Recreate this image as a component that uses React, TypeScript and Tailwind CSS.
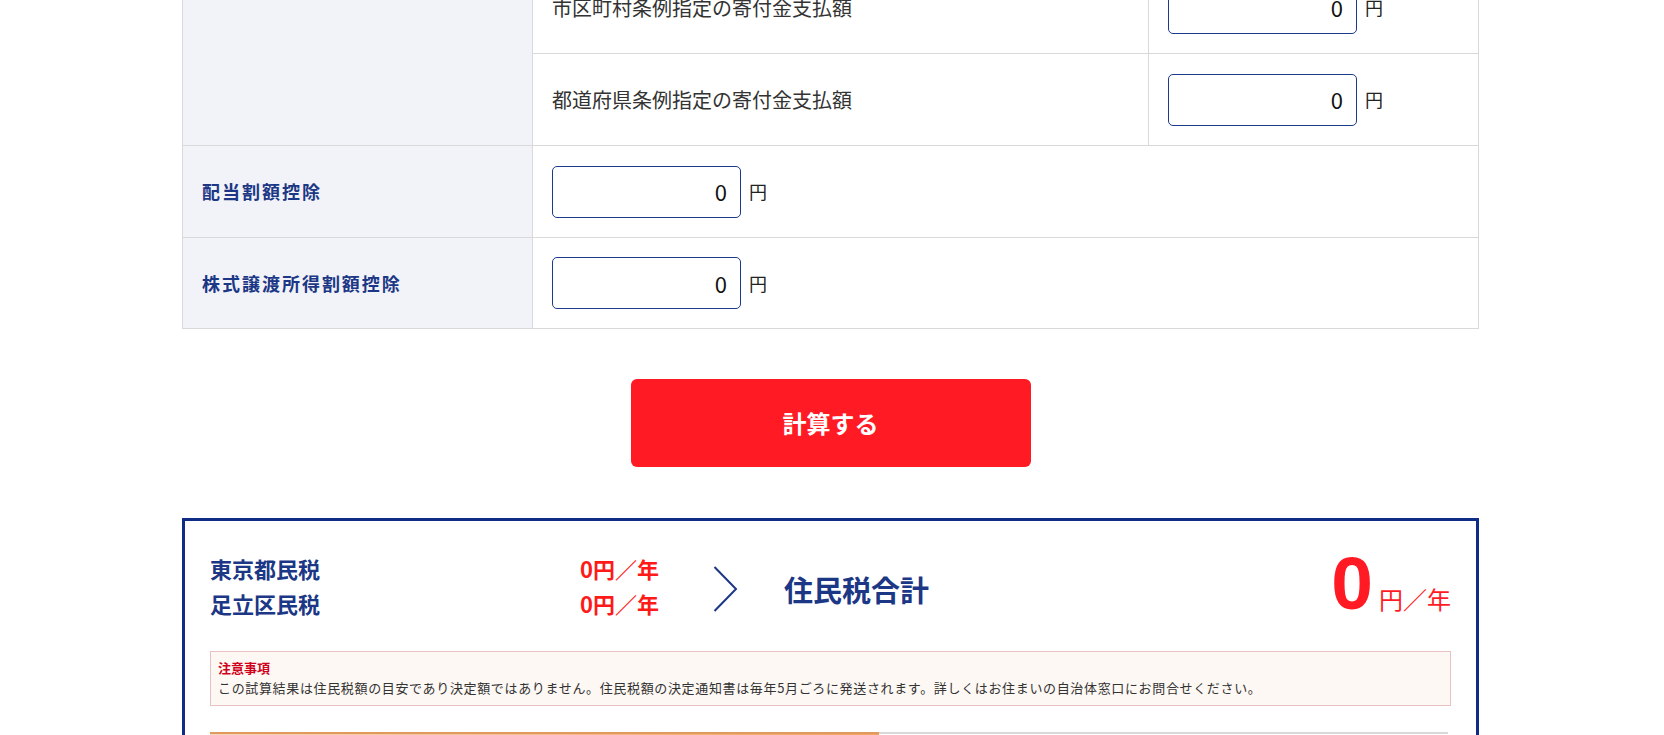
import React from "react";

const font = { fontFamily: '"Noto Sans CJK JP", "Noto Sans", sans-serif' };

function Yen({ value = "0" }: { value?: string }) {
  return (
    <div className="flex items-center">
      <div className="w-[189px] h-[52px] rounded-[5px] border border-[#1c3a8c] bg-white flex items-center justify-end pr-[13px] text-[22px] text-[#111]">
        {value}
      </div>
      <span className="ml-[8px] text-[18px] text-[#222]">円</span>
    </div>
  );
}

export default function App() {
  return (
    <div className="bg-white w-[1664px] h-[735px] overflow-hidden text-[#222]" style={font}>
      <div className="w-[1297px] ml-[182px] -mt-[39px]">
        {/* table */}
        <div className="border border-[#d9d9d9]">
          {/* grouped rows */}
          <div className="flex">
            <div className="w-[350px] bg-[#f2f3f8] border-r border-[#d9d9d9]" />
            <div className="flex-1 flex flex-col">
              <div className="flex h-[92px] border-b border-[#d9d9d9]">
                <div className="w-[616px] pl-[19px] flex items-center text-[20px] text-[#333] border-r border-[#d9d9d9]">
                  市区町村条例指定の寄付金支払額
                </div>
                <div className="flex-1 pl-[19px] flex items-center">
                  <Yen />
                </div>
              </div>
              <div className="flex h-[91px]">
                <div className="w-[616px] pl-[19px] flex items-center text-[20px] text-[#333] border-r border-[#d9d9d9]">
                  都道府県条例指定の寄付金支払額
                </div>
                <div className="flex-1 pl-[19px] flex items-center">
                  <Yen />
                </div>
              </div>
            </div>
          </div>
          <div className="flex h-[92px] border-t border-[#d9d9d9]">
            <div className="w-[350px] bg-[#f2f3f8] border-r border-[#d9d9d9] pl-[19px] flex items-center text-[18px] font-bold text-[#1b3785] tracking-[0.11em]">
              配当割額控除
            </div>
            <div className="flex-1 pl-[19px] flex items-center">
              <Yen />
            </div>
          </div>
          <div className="flex h-[91px] border-t border-[#d9d9d9]">
            <div className="w-[350px] bg-[#f2f3f8] border-r border-[#d9d9d9] pl-[19px] flex items-center text-[18px] font-bold text-[#1b3785] tracking-[0.11em]">
              株式譲渡所得割額控除
            </div>
            <div className="flex-1 pl-[19px] flex items-center">
              <Yen />
            </div>
          </div>
        </div>

        {/* button */}
        <div className="flex justify-center mt-[50px]">
          <button className="w-[400px] h-[88px] rounded-[6px] bg-[#ff1a24] text-white text-[24px] font-bold">
            計算する
          </button>
        </div>

        {/* result */}
        <div className="mt-[51px] border-[3px] border-[#0f2d84] px-[25px] pt-[32px] h-[300px]">
          <div className="flex items-center h-[70px]">
            <div className="w-[449px] flex flex-col text-[22px] font-bold leading-[35px] -mt-[4px]">
              <div className="flex justify-between">
                <span className="text-[#1b3785]">東京都民税</span>
                <span className="text-[#ff1a1a]">0円／年</span>
              </div>
              <div className="flex justify-between">
                <span className="text-[#1b3785]">足立区民税</span>
                <span className="text-[#ff1a1a]">0円／年</span>
              </div>
            </div>
            <svg className="ml-[54px] mt-[2px]" width="25" height="46" viewBox="0 0 25 46">
              <polyline points="1.5,1 23,23 1.5,45" fill="none" stroke="#1b3785" strokeWidth="2" />
            </svg>
            <div className="ml-[46px] text-[29px] font-bold text-[#1b3785] mt-[4px]">住民税合計</div>
            <div className="ml-auto flex items-baseline text-[#ff1a24] -mt-[4px]">
              <span
                className="text-[75px] font-bold leading-[56px]"
                style={{ fontFamily: '"Liberation Sans", Arial, sans-serif' }}
              >
                0
              </span>
              <span className="ml-[6px] text-[24px]">円／年</span>
            </div>
          </div>

          <div className="mt-[28px] border border-[#e8c2c2] bg-[#fdf8f4] px-[7px] pt-[6px] pb-[7px] text-[13px] leading-[20px]">
            <div className="text-[#d0021b] font-bold">注意事項</div>
            <div className="text-[#333] tracking-[0.05em]">
              この試算結果は住民税額の目安であり決定額ではありません。住民税額の決定通知書は毎年5月ごろに発送されます。詳しくはお住まいの自治体窓口にお問合せください。
            </div>
          </div>

          <div className="mt-[26px] border-t-2 border-[#d9d9d9] mr-[3px]">
            <div className="-mt-[2px] w-[669px] h-[20px] border-t-2 border-[#e09a5e] bg-gradient-to-r from-[#f8d6b6] to-[#f2a462]" />
          </div>
        </div>
      </div>
    </div>
  );
}
